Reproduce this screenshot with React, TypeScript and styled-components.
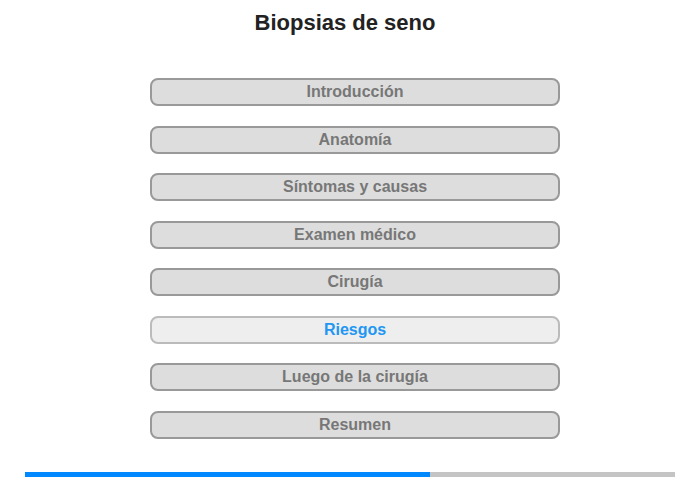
import React from "react";
import styled, { createGlobalStyle } from "styled-components";

const Global = createGlobalStyle`
  html, body { margin: 0; padding: 0; background: #fff; }
  body { font-family: "Liberation Sans", Arial, sans-serif; }
`;

const Page = styled.div`
  width: 700px;
  height: 480px;
  display: flex;
  flex-direction: column;
`;

const Title = styled.h1`
  margin: 10px 0 0 0;
  padding-right: 10px;
  font-size: 22px;
  line-height: 25px;
  font-weight: bold;
  color: #222;
  text-align: center;
`;

const Menu = styled.nav`
  margin: 43px 0 0 150px;
  width: 410px;
  display: flex;
  flex-direction: column;
  gap: 19.5px;
`;

const Item = styled.div<{ $active?: boolean }>`
  box-sizing: border-box;
  height: 28px;
  border: 2px solid ${(p) => (p.$active ? "#bbbbbb" : "#999999")};
  border-radius: 8px;
  background: ${(p) => (p.$active ? "#eeeeee" : "#dddddd")};
  color: ${(p) => (p.$active ? "#2196f3" : "#777777")};
  font-size: 16px;
  font-weight: bold;
  line-height: 24px;
  text-align: center;
`;

const Progress = styled.div`
  margin: 33px 0 0 25px;
  width: 650px;
  height: 5px;
  background: #c4c4c4;
`;

const Fill = styled.div`
  height: 100%;
  background: #0088ff;
`;

const items = [
  "Introducción",
  "Anatomía",
  "Síntomas y causas",
  "Examen médico",
  "Cirugía",
  "Riesgos",
  "Luego de la cirugía",
  "Resumen",
];

export default function App() {
  return (
    <Page>
      <Global />
      <Title>Biopsias de seno</Title>
      <Menu>
        {items.map((t) => (
          <Item key={t} $active={t === "Riesgos"}>
            {t}
          </Item>
        ))}
      </Menu>
      <Progress>
        <Fill style={{ width: `${(405 / 650) * 100}%` }} />
      </Progress>
    </Page>
  );
}
